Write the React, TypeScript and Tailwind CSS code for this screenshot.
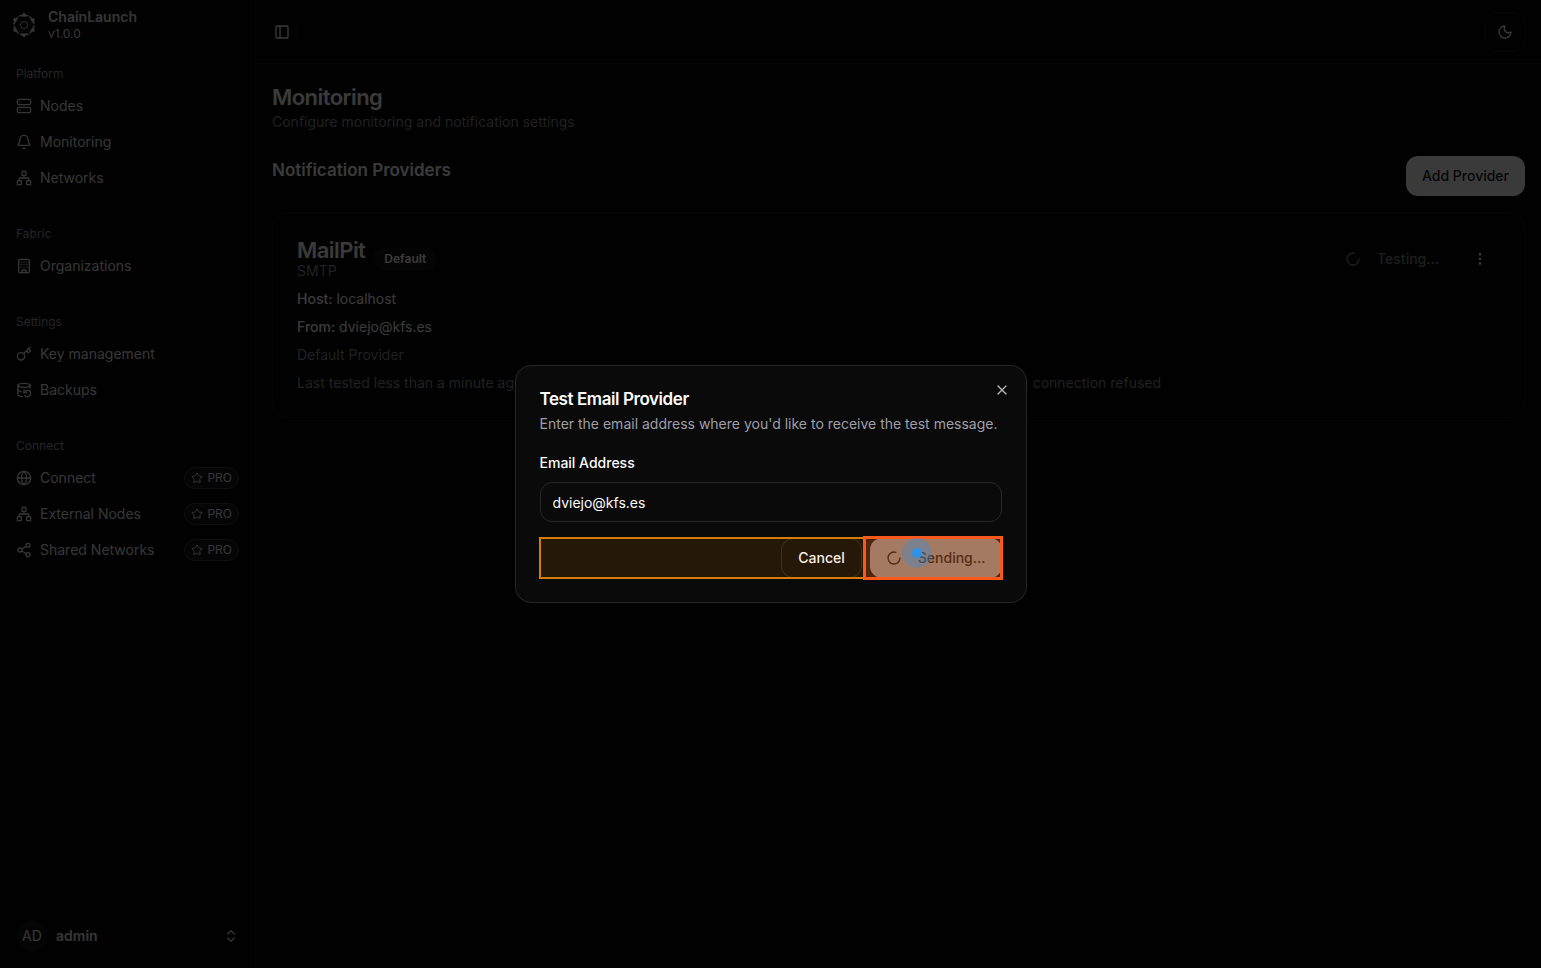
import { useState } from "react"
import type { ReactNode } from "react"
import {
  Bell,
  Building,
  ChevronsUpDown,
  DatabaseBackup,
  EllipsisVertical,
  Globe,
  Key,
  Loader2,
  Moon,
  Network,
  PanelLeft,
  Server,
  Share2,
  Star,
  X,
} from "lucide-react"
import type { LucideIcon } from "lucide-react"

interface menuItemProps {
  titulo: string
  icon: LucideIcon
  pro?: boolean
}

interface menuGroupProps {
  label: string
  items: menuItemProps[]
}

const menu: menuGroupProps[] = [
  {
    label: "Platform",
    items: [
      { titulo: "Nodes", icon: Server },
      { titulo: "Monitoring", icon: Bell },
      { titulo: "Networks", icon: Network },
    ],
  },
  {
    label: "Fabric",
    items: [{ titulo: "Organizations", icon: Building }],
  },
  {
    label: "Settings",
    items: [
      { titulo: "Key management", icon: Key },
      { titulo: "Backups", icon: DatabaseBackup },
    ],
  },
  {
    label: "Connect",
    items: [
      { titulo: "Connect", icon: Globe, pro: true },
      { titulo: "External Nodes", icon: Network, pro: true },
      { titulo: "Shared Networks", icon: Share2, pro: true },
    ],
  },
]

const teeth = [0, 60, 120, 180, 240, 300]

function Logo() {
  return (
    <svg viewBox="0 0 24 24" className="size-6 shrink-0" fill="none" stroke="currentColor" aria-hidden="true">
      <circle cx="12" cy="12" r="3.6" strokeWidth="0.9" />
      {teeth.map((angle) => (
        <g key={angle} transform={`rotate(${angle} 12 12)`}>
          <path d="M7.6 2.8 L10.6 1.7 L11.2 0.2 h1.6 L13.4 1.7 L16.4 2.8 L14.4 3.2 H9.6 Z" fill="currentColor" strokeWidth="0.7" />
          <path d="M17.4 3.4 L18.6 4.4" strokeWidth="1" />
          <path d="M12.6 5.4 C14 5.4 15.2 6 16 7.2" strokeWidth="0.6" opacity="0.3" />
        </g>
      ))}
    </svg>
  )
}

function MenuItem({ titulo, icon: Icon, pro }: menuItemProps) {
  return (
    <li>
      <a href="#" className="flex h-8 items-center gap-2 rounded-md px-2 text-sm text-zinc-200">
        <Icon className="size-4 shrink-0" />
        <span className="grow truncate">{titulo}</span>
        {pro && (
          <span className="flex h-[22px] items-center gap-1 rounded-full border border-[#3f3f46] bg-zinc-900 px-1.5 text-xs">
            <Star className="size-3" />
            PRO
          </span>
        )}
      </a>
    </li>
  )
}

function Sidebar() {
  return (
    <aside className="flex w-64 shrink-0 flex-col border-r border-zinc-900">
      <div className="flex items-center gap-3 px-3 pt-2 text-zinc-200">
        <Logo />
        <div>
          <p className="text-sm leading-[18px] font-semibold">ChainLaunch</p>
          <p className="text-xs leading-4">v1.0.0</p>
        </div>
      </div>

      <nav className="flex grow flex-col gap-2 pt-2">
        {menu.map((group) => (
          <div key={group.label} className="p-2">
            <h3 className="flex h-8 items-center px-2 text-xs text-zinc-400">{group.label}</h3>
            <ul className="flex flex-col gap-1">
              {group.items.map((item) => (
                <MenuItem key={item.titulo} {...item} />
              ))}
            </ul>
          </div>
        ))}
      </nav>

      <div className="p-2">
        <button type="button" className="flex h-12 w-full items-center gap-2 rounded-md p-2 text-sm text-zinc-200">
          <span className="flex size-8 items-center justify-center rounded-full bg-[#121214]">AD</span>
          <span className="grow text-left font-semibold">admin</span>
          <ChevronsUpDown className="size-4" />
        </button>
      </div>
    </aside>
  )
}

function Row({ children, muted }: { children: ReactNode; muted?: boolean }) {
  return <p className={muted ? "text-sm text-[#8a8a91]" : "text-sm"}>{children}</p>
}

function ProviderCard() {
  return (
    <section className="mt-4 rounded-2xl border border-zinc-900 p-6">
      <div className="flex items-center justify-between">
        <div className="flex items-center gap-2">
          <div>
            <h3 className="pt-0.5 text-[22px] leading-[22px] font-semibold tracking-tight">MailPit</h3>
            <p className="text-sm text-[#8a8a91]">SMTP</p>
          </div>
          <span className="rounded-full border border-transparent bg-[#121214] px-2.5 py-0.5 text-xs font-semibold">
            Default
          </span>
        </div>
        <div className="flex items-center gap-2">
          <button
            type="button"
            disabled
            className="flex h-9 items-center gap-4 rounded-xl border border-transparent px-3 text-sm font-medium opacity-50"
          >
            <Loader2 className="size-4" />
            Testing...
          </button>
          <button type="button" aria-label="Options" className="flex size-10 items-center justify-center rounded-xl">
            <EllipsisVertical className="size-4" />
          </button>
        </div>
      </div>

      <div className="mt-2 space-y-2">
        <Row>
          <strong className="font-medium">Host:</strong> localhost
        </Row>
        <Row>
          <strong className="font-medium">From:</strong> dviejo@kfs.es
        </Row>
        <Row muted>Default Provider</Row>
        <Row muted>
          Last tested less than a minute ago: Failed to connect to SMTP server localhost: dial tcp 127.0.0.1:1025: connect:
          connection refused
        </Row>
      </div>
    </section>
  )
}

function TestDialog() {
  const [email, setEmail] = useState("dviejo@kfs.es")

  return (
    <div className="fixed inset-0 flex items-center justify-center bg-black/77">
      <div
        role="dialog"
        aria-labelledby="test-title"
        className="relative flex w-full max-w-lg flex-col gap-4 rounded-2xl border border-[#27272a] bg-[#0a0a0a] p-6"
      >
        <div className="space-y-1.5">
          <h2 id="test-title" className="text-[17px] leading-[18px] font-semibold tracking-tight">
            Test Email Provider
          </h2>
          <p className="text-sm text-zinc-400">Enter the email address where you'd like to receive the test message.</p>
        </div>

        <div>
          <label htmlFor="email" className="mb-1.5 block text-sm leading-[26px] font-medium">
            Email Address
          </label>
          <input
            id="email"
            type="email"
            value={email}
            onChange={(e) => setEmail(e.target.value)}
            className="h-10 w-full rounded-xl border border-[#27272a] bg-transparent px-3 text-sm outline-none"
          />
        </div>

        <div className="relative flex justify-end gap-2">
          <button type="button" className="h-10 rounded-xl border border-[#27272a] px-4 text-sm font-medium">
            Cancel
          </button>
          <button
            type="button"
            disabled
            className="flex h-10 items-center gap-4 rounded-xl bg-zinc-50 px-4 text-sm font-medium text-zinc-900 opacity-50"
          >
            <Loader2 className="size-4" />
            Sending...
          </button>

          {/* click highlight */}
          <div className="pointer-events-none absolute -inset-px border-2 border-[#d47e0a] bg-[#ff8c00]/11" />
          <div className="pointer-events-none absolute -top-0.5 -right-px -bottom-0.5 w-[140px] border-3 border-[#f9591c] bg-[#f9591c]/20" />
          <div className="pointer-events-none absolute top-0 right-[70px] flex size-[30px] items-center justify-center rounded-full bg-[#2f93e8]/33">
            <span className="size-2.5 rounded-full bg-[#2f93e8]" />
          </div>
        </div>

        <button type="button" aria-label="Close" className="absolute top-4 right-4 opacity-70">
          <X className="size-4" />
        </button>
      </div>
    </div>
  )
}

function App() {
  return (
    <div className="flex min-h-screen bg-[#050506] font-[Inter,sans-serif] text-zinc-50">
      <Sidebar />

      <div className="flex min-w-0 grow flex-col">
        <header className="flex h-16 items-center justify-between border-b border-zinc-900 px-4">
          <div className="-ml-1 flex items-center gap-px">
            <button type="button" aria-label="Toggle sidebar" className="flex size-7 items-center justify-center">
              <PanelLeft className="size-4" />
            </button>
            <span className="h-4 w-px bg-zinc-900" />
          </div>
          <button
            type="button"
            aria-label="Toggle theme"
            className="flex size-10 items-center justify-center rounded-xl border border-zinc-900"
          >
            <Moon className="size-4" />
          </button>
        </header>

        <main className="px-4 pt-[18px] pb-4">
          <h1 className="text-[22px] leading-[30px] font-semibold tracking-tight">Monitoring</h1>
          <p className="text-sm text-[#8a8a91]">Configure monitoring and notification settings</p>

          <div className="mt-6 flex items-start justify-between">
            <h2 className="text-[17px] leading-7 font-semibold">Notification Providers</h2>
            <button type="button" className="h-10 rounded-xl bg-zinc-50 px-4 text-sm font-medium text-zinc-900">
              Add Provider
            </button>
          </div>

          <ProviderCard />
        </main>
      </div>

      <TestDialog />
    </div>
  )
}

export default App
